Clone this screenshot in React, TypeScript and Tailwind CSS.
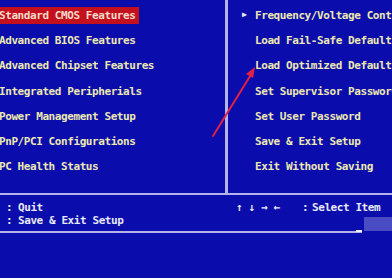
import React from 'react';

const leftItems = [
  'Standard CMOS Features',
  'Advanced BIOS Features',
  'Advanced Chipset Features',
  'Integrated Peripherials',
  'Power Management Setup',
  'PnP/PCI Configurations',
  'PC Health Status',
];

const rightItems = [
  'Frequency/Voltage Control',
  'Load Fail-Safe Defaults',
  'Load Optimized Defaults',
  'Set Supervisor Password',
  'Set User Password',
  'Save & Exit Setup',
  'Exit Without Saving',
];

const font = "font-['DejaVu_Sans_Mono',monospace] font-bold text-[11px] tracking-[-0.42px] leading-none whitespace-nowrap";

export default function App() {
  return (
    <div className={`relative w-[392px] h-[278px] overflow-hidden bg-[#0a0cac] ${font}`}>
      {/* main menu */}
      <div className="flex h-[193px]">
        <div className="w-[225px] shrink-0 pt-[2.5px] flex flex-col">
          {leftItems.map((t, i) => (
            <div key={t} className="h-[25.3px] flex items-center">
              {i === 0 ? (
                <span className="ml-[-1px] h-[17px] pr-[4px] flex items-center bg-[#c4101e] text-[#f4dcc8]">{t}</span>
              ) : (
                <span className="ml-[-1px] text-[#ece8b0]">{t}</span>
              )}
            </div>
          ))}
        </div>
        <div className="w-[3px] shrink-0 bg-[#b4b4ec]" />
        <div className="flex-1 min-w-0 overflow-hidden pt-[2.5px] flex flex-col">
          {rightItems.map((t, i) => (
            <div key={t} className="h-[25.3px] flex items-center text-[#ece8b0]">
              <span className="w-[27px] shrink-0 pl-[14px] text-[8px] text-[#e8e8f4]">{i === 0 ? '▶' : ''}</span>
              <span>{t}</span>
            </div>
          ))}
        </div>
      </div>

      <div className="h-[2px] bg-[#b4b4ec]" />

      {/* key help */}
      <div className="flex h-[36px] pt-[7px] text-[#e8e8f6]">
        <div className="w-[228px] shrink-0 pl-[6px] flex flex-col gap-[3px]">
          <div className="flex h-[10px] items-center">
            <span className="w-[12px]">:</span>
            <span>Quit</span>
          </div>
          <div className="flex h-[10px] items-center">
            <span className="w-[12px]">:</span>
            <span>Save &amp; Exit Setup</span>
          </div>
        </div>
        <div className="flex-1 flex flex-col">
          <div className="flex h-[10px] items-center">
            <span className="pl-[8px] w-[74px] tracking-[6px]">↑↓→←</span>
            <span className="w-[10px]">:</span>
            <span>Select Item</span>
          </div>
          <div className="flex-1 flex justify-end">
            <div className="w-[28px] mt-[5px] bg-[#4a4cc4]" />
          </div>
        </div>
      </div>

      <div className="relative h-[2px] w-[362px] bg-[#b4b4ec]">
        <div className="absolute right-[0px] top-[-1px] w-[6px] h-[2px] bg-[#f0f0ff]" />
      </div>

      {/* red annotation arrow */}
      <svg className="absolute left-0 top-0 pointer-events-none" width="392" height="278">
        <line x1="213" y1="136" x2="252" y2="73" stroke="#e22046" strokeWidth="2" strokeLinecap="round" />
        <polygon points="255,67 246,74 253,78" fill="#e22046" />
      </svg>
    </div>
  );
}
